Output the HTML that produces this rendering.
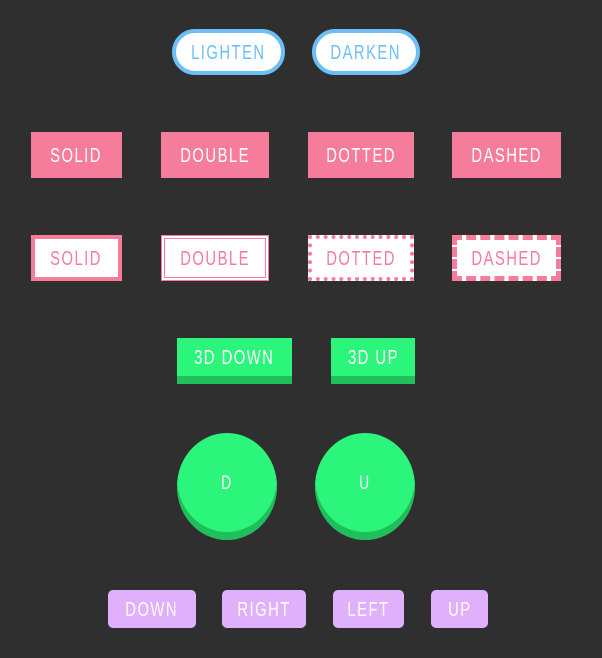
<!DOCTYPE html><html><head><style>
body{margin:0;width:602px;height:658px;background:#2f2f2f;position:relative;overflow:hidden;font-family:"Liberation Sans",sans-serif}
.b{position:absolute;box-sizing:border-box;display:flex;align-items:center;justify-content:center;font-size:20px;letter-spacing:2px;color:#fff;padding-top:2px}
.b span{display:inline-block;transform:scaleX(.74);white-space:nowrap}
.p{background:#fff;border:4px solid #6bbff6;border-radius:24px;color:#6bbff6;top:29px;height:46px}
.f{background:#f67c9b;top:132px;height:46px}
.o{background:#fff;color:#f67c9b;top:235px;height:46px}
.g{background:#2cf57b;top:338px;height:46px;box-shadow:inset 0 -8px 0 #1fbf5c;padding-bottom:6px;padding-top:0}
.c{background:#2cf57b;width:100px;height:107px;top:433px;border-radius:50%;box-shadow:inset 0 -8px 0 #1fbf5c;padding-bottom:8px;font-size:19px}
.u{background:#e0b0fd;top:590px;height:38px;border-radius:5px}
</style></head><body>
<div class="b p" style="left:172px;width:113px"><span>LIGHTEN</span></div>
<div class="b p" style="left:312px;width:108px"><span>DARKEN</span></div>
<div class="b f" style="left:31px;width:91px"><span>SOLID</span></div>
<div class="b f" style="left:161px;width:108px"><span>DOUBLE</span></div>
<div class="b f" style="left:308px;width:106px"><span>DOTTED</span></div>
<div class="b f" style="left:452px;width:109px"><span>DASHED</span></div>
<div class="b o" style="left:31px;width:91px;border:4px solid #f67c9b"><span>SOLID</span></div>
<div class="b o" style="left:161px;width:108px;border:4px double #f67c9b"><span>DOUBLE</span></div>
<div class="b o" style="left:308px;width:106px;border:4px dotted #f67c9b"><span>DOTTED</span></div>
<div class="b o" style="left:452px;width:109px;border:5px dashed #f67c9b"><span>DASHED</span></div>
<div class="b g" style="left:177px;width:115px"><span>3D DOWN</span></div>
<div class="b g" style="left:331px;width:84px"><span>3D UP</span></div>
<div class="b c" style="left:177px"><span>D</span></div>
<div class="b c" style="left:315px"><span>U</span></div>
<div class="b u" style="left:108px;width:88px"><span>DOWN</span></div>
<div class="b u" style="left:222px;width:84px"><span>RIGHT</span></div>
<div class="b u" style="left:333px;width:71px"><span>LEFT</span></div>
<div class="b u" style="left:431px;width:57px"><span>UP</span></div>
</body></html>
